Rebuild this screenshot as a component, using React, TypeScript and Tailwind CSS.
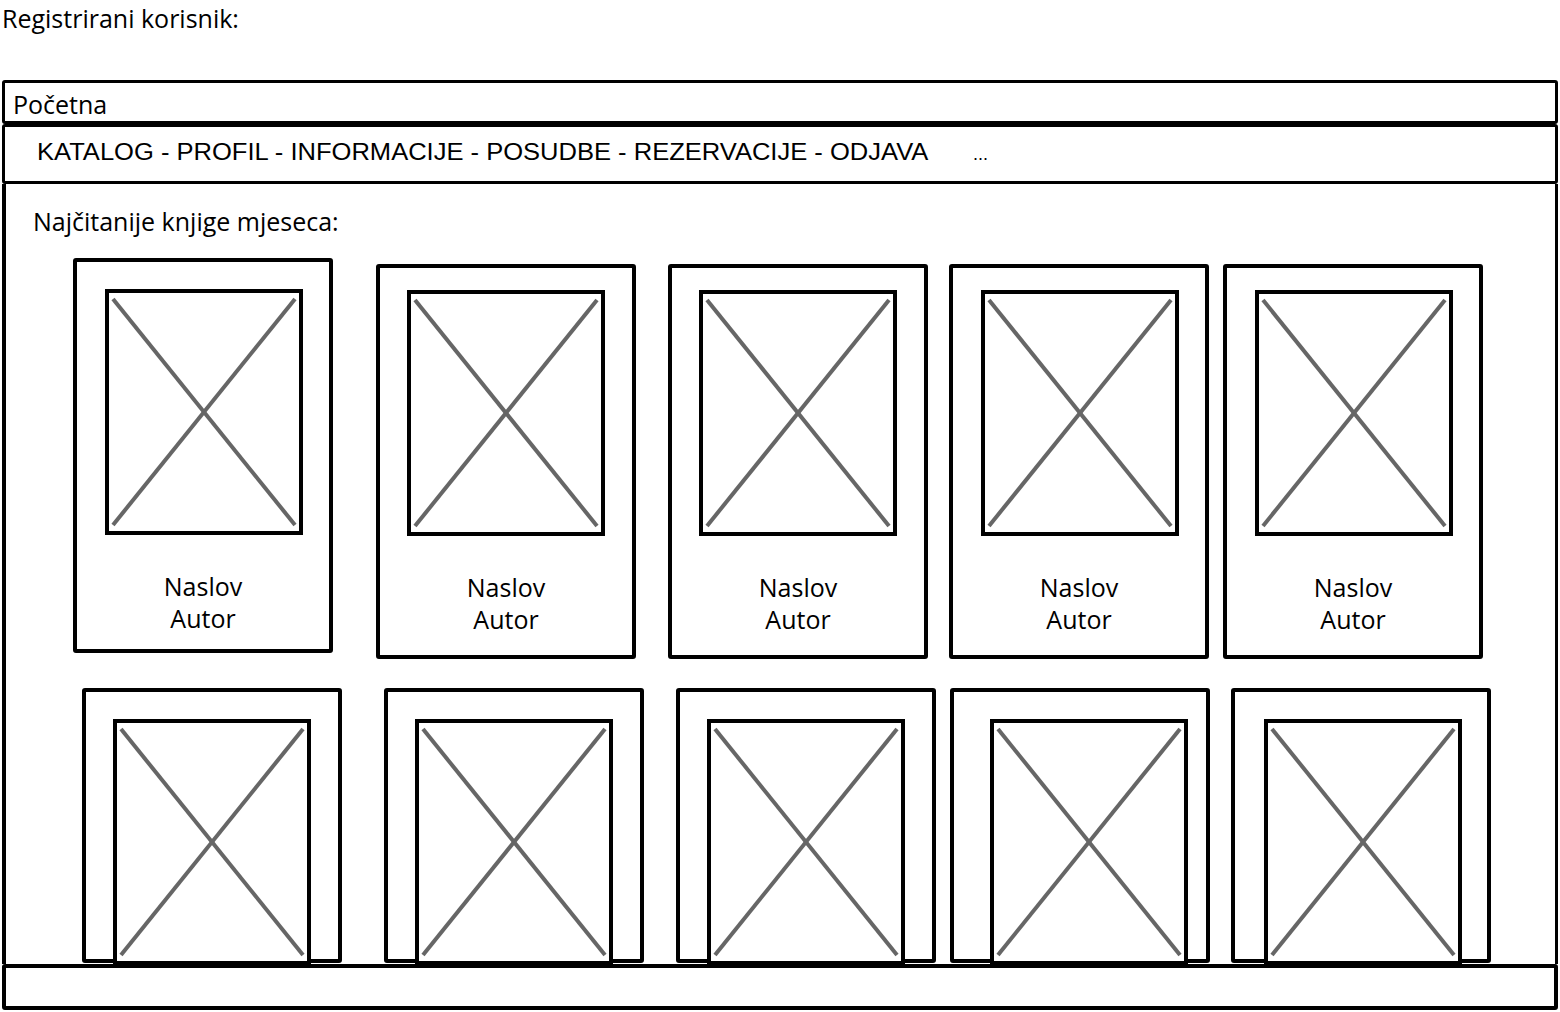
import React from 'react';

type CardSpec = {
  card: string;
  img: string;
};

const topRow: CardSpec[] = [
  { card: 'ml-[67px] mt-0', img: 'mt-[27px] ml-[28px]' },
  { card: 'ml-[43px] mt-[6px]', img: 'mt-[22px] ml-[27px]' },
  { card: 'ml-[32px] mt-[6px]', img: 'mt-[22px] ml-[27px]' },
  { card: 'ml-[21px] mt-[6px]', img: 'mt-[22px] ml-[28px]' },
  { card: 'ml-[14px] mt-[6px]', img: 'mt-[22px] ml-[28px]' },
];

const bottomRow: CardSpec[] = [
  { card: 'ml-[76px]', img: 'mt-[27px] ml-[27px]' },
  { card: 'ml-[42px]', img: 'mt-[27px] ml-[27px]' },
  { card: 'ml-[32px]', img: 'mt-[27px] ml-[27px]' },
  { card: 'ml-[14px]', img: 'mt-[27px] ml-[36px]' },
  { card: 'ml-[21px]', img: 'mt-[27px] ml-[29px]' },
];

function ImagePlaceholder({ className }: { className: string }) {
  return (
    <div className={`relative w-[198px] h-[246px] shrink-0 border-[4px] border-black bg-white ${className}`}>
      <svg className="absolute inset-0 w-full h-full" viewBox="0 0 190 238" preserveAspectRatio="none">
        <line x1="4" y1="6" x2="186" y2="232" stroke="#666666" strokeWidth="4" />
        <line x1="186" y1="6" x2="4" y2="232" stroke="#666666" strokeWidth="4" />
      </svg>
    </div>
  );
}

function BookCard({ spec, full }: { spec: CardSpec; full: boolean }) {
  return (
    <div
      className={`shrink-0 w-[260px] border-[4px] border-black rounded-[3px] bg-white ${
        full ? 'h-[395px]' : 'h-[275px]'
      } ${spec.card}`}
    >
      <ImagePlaceholder className={spec.img} />
      {full && (
        <div className="mt-[35px] text-center text-[25px] leading-[32px]">
          <div>Naslov</div>
          <div>Autor</div>
        </div>
      )}
    </div>
  );
}

export default function App() {
  return (
    <div className="w-[1560px] h-[1012px] bg-white text-black overflow-hidden flex flex-col font-['Open_Sans',sans-serif] font-medium">
      <div className="h-[80px] shrink-0 pl-[2px] pt-[2px] text-[25px] leading-[32px]">Registrirani korisnik:</div>

      <div className="mx-[2px] flex flex-col h-[930px]">
        <div className="h-[44px] shrink-0 border-[3px] border-black rounded-[3px] pl-[8px] pt-[5px] text-[25px] leading-[32px]">
          Početna
        </div>

        <div className="h-[60px] shrink-0 border-[3px] border-black rounded-[3px] pl-[32px] pt-[9px] flex items-baseline font-['Liberation_Sans',Arial,sans-serif] font-normal text-[23px] leading-[32px]">
          <div className="w-[936px] shrink-0">
            <span className="inline-block origin-left scale-x-[1.11] whitespace-nowrap">
              KATALOG - PROFIL - INFORMACIJE - POSUDBE - REZERVACIJE - ODJAVA
            </span>
          </div>
          <span className="text-[18px]">...</span>
        </div>

        <div className="flex-1 min-h-0 overflow-hidden border-l-[4px] border-r-[3px] border-black pt-[21px]">
          <div className="pl-[27px] text-[25px] leading-[32px]">Najčitanije knjige mjeseca:</div>

          <div className="mt-[21px] flex items-start">
            {topRow.map((spec, i) => (
              <BookCard key={i} spec={spec} full />
            ))}
          </div>

          <div className="mt-[29px] flex items-start">
            {bottomRow.map((spec, i) => (
              <BookCard key={i} spec={spec} full={false} />
            ))}
          </div>
        </div>

        <div className="h-[46px] shrink-0 border-[4px] border-black rounded-[3px] bg-white" />
      </div>
    </div>
  );
}
